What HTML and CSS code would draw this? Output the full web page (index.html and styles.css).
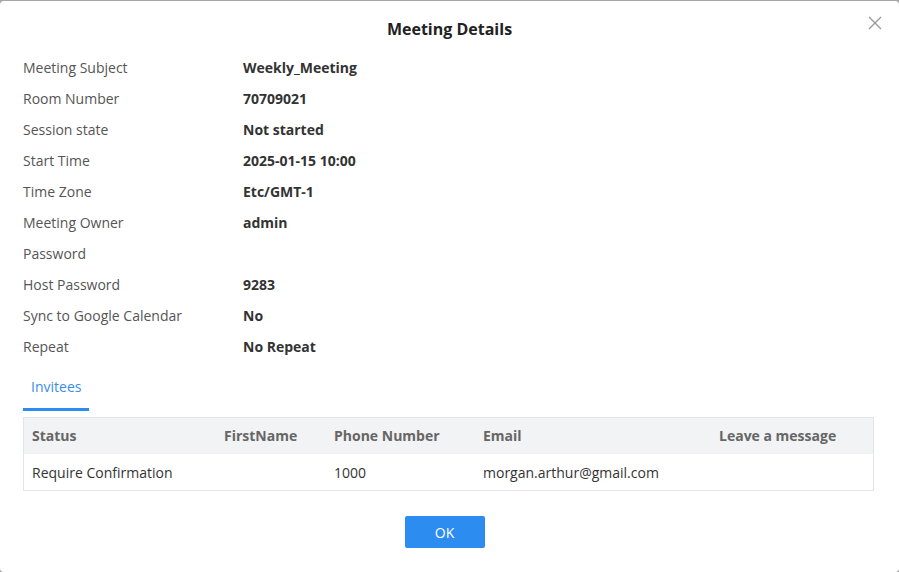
FILE: index.html
```html
<!DOCTYPE html>
<html lang="en">
<head>
    <meta charset="UTF-8">
    <meta name="viewport" content="width=device-width, initial-scale=1.0">
    <title>Meeting Details</title>
    <link rel="stylesheet" href="styles.css">
</head>
<body>

<div class="modal">
    <div class="modal-header">
        <h1 class="modal-title">Meeting Details</h1>
        <button class="close-btn" aria-label="Close">
            <svg width="14" height="14" viewBox="0 0 14 14">
                <path d="M1 1 L13 13 M13 1 L1 13" stroke="#9a9a9a" stroke-width="1.4" fill="none"/>
            </svg>
        </button>
    </div>

    <div class="details">
        <div class="row"><span class="label">Meeting Subject</span><span class="value">Weekly_Meeting</span></div>
        <div class="row"><span class="label">Room Number</span><span class="value">70709021</span></div>
        <div class="row"><span class="label">Session state</span><span class="value">Not started</span></div>
        <div class="row"><span class="label">Start Time</span><span class="value">2025-01-15 10:00</span></div>
        <div class="row"><span class="label">Time Zone</span><span class="value">Etc/GMT-1</span></div>
        <div class="row"><span class="label">Meeting Owner</span><span class="value">admin</span></div>
        <div class="row"><span class="label">Password</span><span class="value"></span></div>
        <div class="row"><span class="label">Host Password</span><span class="value">9283</span></div>
        <div class="row"><span class="label">Sync to Google Calendar</span><span class="value">No</span></div>
        <div class="row"><span class="label">Repeat</span><span class="value">No Repeat</span></div>
    </div>

    <div class="tabs">
        <span class="tab active">Invitees</span>
    </div>

    <table class="invitees">
        <thead>
            <tr>
                <th class="c-status">Status</th>
                <th class="c-first">FirstName</th>
                <th class="c-phone">Phone Number</th>
                <th class="c-email">Email</th>
                <th>Leave a message</th>
            </tr>
        </thead>
        <tbody>
            <tr>
                <td>Require Confirmation</td>
                <td></td>
                <td>1000</td>
                <td>morgan.arthur@gmail.com</td>
                <td></td>
            </tr>
        </tbody>
    </table>

    <div class="modal-footer">
        <button class="ok-btn">OK</button>
    </div>
</div>

</body>
</html>
```

FILE: styles.css
```css
html, body {
    margin: 0;
    height: 100%;
}
body {
    background-color: #a6a6a6;
    font-family: "Open Sans", "Liberation Sans", sans-serif;
    font-size: 14px;
    color: #333333;
}

.modal {
    box-sizing: border-box;
    margin-top: 1px;
    height: 571px;
    background-color: #ffffff;
    border-radius: 4px;
    padding: 0 25px 0 23px;
}

.modal-header {
    position: relative;
    padding: 17px 0 12px;
    text-align: center;
}
.modal-title {
    margin: 0 -2px 0 0;
    font-size: 16px;
    line-height: 22px;
    font-weight: 700;
    color: #222222;
}
.close-btn {
    position: absolute;
    top: 15px;
    right: -9px;
    width: 16px;
    height: 16px;
    padding: 0;
    border: none;
    background: none;
    cursor: pointer;
}

.row {
    display: flex;
    height: 31px;
    align-items: center;
}
.label {
    width: 220px;
    color: #555555;
}
.value {
    font-weight: 700;
    color: #333333;
}

.tabs {
    display: flex;
    padding-top: 15px;
}
.tab {
    padding: 0 8px 11px;
    line-height: 20px;
    color: #3a8ee6;
    border-bottom: 3px solid transparent;
}
.tab.active {
    border-bottom-color: #2d8cf0;
}

.invitees {
    width: 100%;
    margin-top: 6px;
    border-collapse: collapse;
    border: 1px solid #e3e4ea;
    table-layout: fixed;
}
.invitees th,
.invitees td {
    text-align: left;
    padding: 0 8px;
}
.invitees th {
    height: 35px;
    background-color: #f2f3f5;
    color: #666666;
    font-weight: 700;
}
.invitees td {
    height: 36px;
    color: #333333;
    border-top: 1px solid #f0f0f0;
}
.c-status { width: 176px; }
.c-first { width: 94px; }
.c-phone { width: 133px; }
.c-email { width: 220px; }

.modal-footer {
    display: flex;
    justify-content: center;
    padding: 25px 8px 0 0;
}
.ok-btn {
    width: 80px;
    height: 32px;
    background-color: #2d8cf0;
    color: #ffffff;
    border: none;
    border-radius: 2px;
    font-family: inherit;
    font-size: 14px;
    cursor: pointer;
}
.ok-btn:hover {
    background-color: #2b85e4;
}
```
